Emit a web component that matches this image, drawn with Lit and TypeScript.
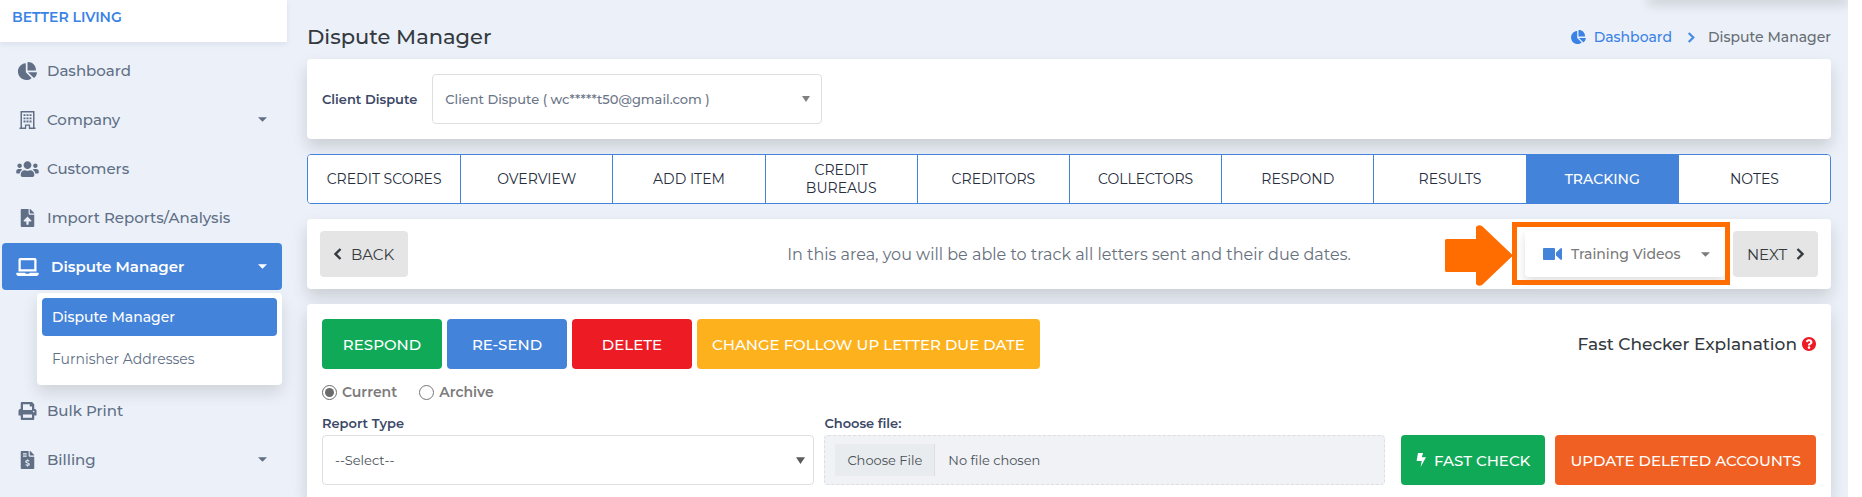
import { LitElement, html, css, svg, nothing } from "lit";
import { customElement, property, state } from "lit/decorators.js";
import { classMap } from "lit/directives/class-map.js";

const FILE_FOLD =
  "M377 105L279.1 7c-4.5-4.5-10.6-7-17-7H256v128h128v-6.1c0-6.3-2.5-12.4-7-16.9z";

const ICONS: Record<string, { box: string; body: unknown }> = {
  pie: {
    box: "32 0 544 512",
    body: svg`<path d="M304 240V16.6c0-9 7-16.6 16-16.6C443.7 0 544 100.3 544 224c0 9-7.6 16-16.6 16H304zM32 272C32 150.7 122.1 50.3 239 34.3c9.2-1.3 17 6.1 17 15.4V288L412.5 444.5c6.7 6.7 6.2 17.7-1.5 23.1C371.8 495.6 323.8 512 272 512C139.5 512 32 404.6 32 272zm526.4 16c9.3 0 16.6 7.8 15.4 17c-7.7 55.9-34.6 105.6-73.9 142.3c-6 5.6-15.4 5.2-21.2-.7L320 288H558.4z"/>`,
  },
  building: {
    box: "0 0 16 18",
    body: svg`<path fill-rule="evenodd" d="M1 0h14v16.6h1V18H9.300v-3.200H6.700V18H0v-1.400h1zM2.500 1.500v15.100h2.900V13.600h5.200v3h2.900V1.500z"/><path d="M4 3.200h2v1.900H4zM7 3.200h2v1.900H7zM10 3.200h2v1.900h-2zM4 6.400h2v1.900H4zM7 6.400h2v1.900H7zM10 6.400h2v1.900h-2zM4 9.600h2v1.900H4zM7 9.600h2v1.900H7zM10 9.600h2v1.900h-2z"/>`,
  },
  users: {
    box: "0 0 640 512",
    body: svg`<path d="M96 224c35.300 0 64-28.700 64-64s-28.700-64-64-64-64 28.700-64 64 28.700 64 64 64zm448 0c35.300 0 64-28.700 64-64s-28.700-64-64-64-64 28.700-64 64 28.700 64 64 64zm32 32h-64c-17.600 0-33.500 7.100-45.100 18.600 40.300 22.100 68.900 62 75.100 109.400h66c17.700 0 32-14.300 32-32v-32c0-35.300-28.700-64-64-64zm-256 0c61.900 0 112-50.100 112-112S381.900 32 320 32 208 82.100 208 144s50.100 112 112 112zm76.800 32h-8.300c-20.800 10-43.900 16-68.500 16s-47.600-6-68.500-16h-8.300C179.600 288 128 339.600 128 403.200V432c0 26.500 21.500 48 48 48h288c26.500 0 48-21.500 48-48v-28.800c0-63.600-51.600-115.200-115.200-115.200zm-223.700-13.400C161.500 263.100 145.600 256 128 256H64c-35.300 0-64 28.700-64 64v32c0 17.700 14.300 32 32 32h65.900c6.300-47.400 34.900-87.300 75.200-109.400z"/>`,
  },
  upload: {
    box: "0 0 384 512",
    body: svg`<path d="M224 136V0H24C10.700 0 0 10.700 0 24v464c0 13.300 10.700 24 24 24h336c13.300 0 24-10.700 24-24V160H248c-13.200 0-24-10.800-24-24zm65.180 216.010H224v80c0 8.840-7.160 16-16 16h-32c-8.840 0-16-7.160-16-16v-80H94.820c-14.280 0-21.410-17.290-11.270-27.360l96.420-95.700c6.650-6.610 17.390-6.610 24.040 0l96.420 95.700c10.150 10.070 3.030 27.360-11.250 27.360z"/><path d=${FILE_FOLD}/>`,
  },
  laptop: {
    box: "0 0 640 512",
    body: svg`<path d="M624 416H381.540c-.74 19.810-14.710 32-32.740 32H288c-18.690 0-33.020-17.470-32.770-32H16c-8.800 0-16 7.200-16 16v16c0 35.200 28.800 64 64 64h512c35.200 0 64-28.800 64-64v-16c0-8.800-7.200-16-16-16zM576 48c0-26.400-21.600-48-48-48H112C85.600 0 64 21.600 64 48v336h512V48zm-64 272H128V64h384v256z"/>`,
  },
  print: {
    box: "0 0 512 512",
    body: svg`<path d="M448 192V77.250c0-8.490-3.370-16.620-9.370-22.630L393.370 9.370c-6-6-14.140-9.370-22.630-9.370H96C78.330 0 64 14.330 64 32v160c-35.350 0-64 28.650-64 64v112c0 8.840 7.160 16 16 16h48v96c0 17.670 14.330 32 32 32h320c17.670 0 32-14.330 32-32v-96h48c8.840 0 16-7.160 16-16V256c0-35.350-28.650-64-64-64zm-64 256H128v-96h256v96zm0-224H128V64h192v48c0 8.840 7.160 16 16 16h48v96zm48 72c-13.250 0-24-10.750-24-24 0-13.260 10.750-24 24-24s24 10.740 24 24c0 13.250-10.750 24-24 24z"/>`,
  },
  invoice: {
    box: "0 0 384 512",
    body: svg`<path fill-rule="evenodd" d="M224 136V0H24C10.700 0 0 10.700 0 24v464c0 13.300 10.700 24 24 24h336c13.300 0 24-10.700 24-24V160H248c-13.200 0-24-10.800-24-24zM64 64h104v32H64zM64 128h104v32H64z"/><path d=${FILE_FOLD}/><path d="M240 290c-20-20-96-22-96 16 0 42 98 26 98 68 0 40-78 36-102 12M192 240v36M192 400v40" fill="none" stroke="#ecf1f9" stroke-width="34"/>`,
  },
  video: {
    box: "0 0 19 12",
    body: svg`<rect width="12" height="12" rx="1"/><path d="M13 4.500L17 .8Q19-.8 19 1.200v9.600q0 2-2 .4L13 7.500z"/>`,
  },
  right: {
    box: "0 0 8 12",
    body: svg`<path d="M1.500 1l5 5-5 5" fill="none" stroke="currentColor" stroke-width="2.400"/>`,
  },
  left: {
    box: "0 0 8 12",
    body: svg`<path d="M6.500 1l-5 5 5 5" fill="none" stroke="currentColor" stroke-width="2.400"/>`,
  },
  caret: { box: "0 0 8 4", body: svg`<path d="M0 0h8L4 4z"/>` },
  drop: { box: "0 0 8 6", body: svg`<path d="M0 0h8L4 6z"/>` },
  bolt: {
    box: "0 0 10 14",
    body: svg`<path d="M2 0h5L5.800 4.300H10L4.600 14l1.100-6H.6z"/>`,
  },
  help: {
    box: "8 8 496 496",
    body: svg`<path d="M504 256c0 136.997-111.043 248-248 248S8 392.997 8 256C8 119.083 119.043 8 256 8s248 111.083 248 248zM262.655 90c-54.497 0-89.255 22.957-116.549 63.758-3.536 5.286-2.353 12.415 2.715 16.258l34.699 26.310c5.205 3.947 12.621 3.008 16.665-2.122 17.864-22.658 30.113-35.797 57.303-35.797 20.429 0 45.698 13.148 45.698 32.958 0 14.976-12.363 22.667-32.534 33.976C247.128 238.528 216 254.941 216 296v4c0 6.627 5.373 12 12 12h56c6.627 0 12-5.373 12-12v-1.333c0-28.462 83.186-29.647 83.186-106.667 0-58.002-60.165-102-116.531-102zM256 338c-25.365 0-46 20.635-46 46 0 25.364 20.635 46 46 46s46-20.636 46-46c0-25.365-20.635-46-46-46z"/>`,
  },
};

const icon = (name: string, cls = "") =>
  html`<svg class="icon ${cls}" viewBox=${ICONS[name].box} fill="currentColor" aria-hidden="true">${ICONS[name].body}</svg>`;

interface NavItem {
  label: string;
  icon: string;
  menu?: boolean;
  active?: boolean;
  children?: string[];
}

const NAV: NavItem[] = [
  { label: "Dashboard", icon: "pie" },
  { label: "Company", icon: "building", menu: true },
  { label: "Customers", icon: "users" },
  { label: "Import Reports/Analysis", icon: "upload" },
  {
    label: "Dispute Manager",
    icon: "laptop",
    menu: true,
    active: true,
    children: ["Dispute Manager", "Furnisher Addresses"],
  },
  { label: "Bulk Print", icon: "print" },
  { label: "Billing", icon: "invoice", menu: true },
];

@customElement("side-nav")
export class SideNav extends LitElement {
  @property() brand = "";

  static styles = css`
    :host {
      display: block;
    }
    .brand {
      height: 42px;
      padding: 8px 12px;
      box-sizing: border-box;
      background: #fff;
      color: #3b82e6;
      font-size: 14px;
      font-weight: 600;
      line-height: 18px;
      box-shadow: 0 2px 6px rgba(60, 80, 120, 0.1);
    }
    ul {
      list-style: none;
      margin: 0;
      padding: 0;
    }
    .menu {
      display: grid;
      gap: 2px;
      padding: 5px 5px 0 2px;
    }
    a {
      display: flex;
      align-items: center;
      color: #606f86;
      text-decoration: none;
    }
    .item {
      height: 47px;
      padding: 0 15px 0 14px;
      font-size: 15px;
      font-weight: 500;
      border-radius: 4px;
      gap: 8px;
    }
    .item .label {
      flex: 1;
    }
    .item.active {
      background: #4483da;
      color: #fff;
      font-weight: 600;
      gap: 12px;
    }
    .icon {
      width: 23px;
      height: 18px;
    }
    .caret {
      width: 9px;
      height: 5px;
    }
    .sub {
      display: grid;
      gap: 4px;
      margin: 3px 0 0 35px;
      padding: 5px 5px 7px;
      border-radius: 4px;
      background: #fff;
      box-shadow: 0 8px 16px rgba(0, 0, 0, 0.12);
    }
    .sub a {
      height: 38px;
      padding: 0 10px;
      border-radius: 4px;
      font-size: 14px;
    }
    .sub a.active {
      background: #4483da;
      color: #fff;
      font-weight: 500;
    }
  `;

  render() {
    return html`
      <div class="brand">${this.brand}</div>
      <nav aria-label="Main">
        <ul class="menu">
          ${NAV.map(
            (n) => html`<li>
              <a class=${classMap({ item: true, active: !!n.active })} href="#">
                ${icon(n.icon)}<span class="label">${n.label}</span>
                ${n.menu ? icon("caret", "caret") : nothing}
              </a>
              ${n.children
                ? html`<ul class="sub">
                    ${n.children.map(
                      (c, i) => html`<li><a class=${classMap({ active: i === 0 })} href="#">${c}</a></li>`
                    )}
                  </ul>`
                : nothing}
            </li>`
          )}
        </ul>
      </nav>
    `;
  }
}

const TABS = [
  "CREDIT SCORES",
  "OVERVIEW",
  "ADD ITEM",
  "CREDIT BUREAUS",
  "CREDITORS",
  "COLLECTORS",
  "RESPOND",
  "RESULTS",
  "TRACKING",
  "NOTES",
];

@customElement("app-root")
export class AppRoot extends LitElement {
  @state() private tab = "TRACKING";

  static styles = css`
    :host {
      display: flex;
      position: relative;
      height: 100vh;
      overflow: hidden;
      box-sizing: border-box;
      border-right: 14px solid #fff;
      background: #ecf1f9;
      color: #343a40;
      font-family: Montserrat, Inter, "Open Sans", sans-serif;
      font-size: 14px;
    }
    * {
      box-sizing: border-box;
    }
    button,
    select,
    input {
      font: inherit;
      color: inherit;
    }
    button {
      border: 0;
      border-radius: 4px;
      padding: 0;
      cursor: pointer;
    }
    side-nav {
      flex: none;
      width: 287px;
    }
    main {
      flex: 1;
      min-width: 0;
      display: flex;
      flex-direction: column;
      gap: 15px;
      padding: 0 17px 0 20px;
    }
    .tray {
      position: absolute;
      top: -8px;
      right: 0;
      width: 200px;
      height: 8px;
      box-shadow: 0 4px 12px rgba(0, 0, 0, 0.18);
    }
    .head {
      display: flex;
      align-items: center;
      justify-content: space-between;
      height: 44px;
      padding-top: 15px;
      box-sizing: content-box;
      margin-bottom: -15px;
    }
    h1 {
      margin: 0;
      font-size: 21px;
      font-weight: 500;
      line-height: 28px;
    }
    .crumbs {
      display: flex;
      align-items: center;
      font-size: 14px;
      font-weight: 500;
      color: #676d73;
    }
    .crumbs a {
      display: flex;
      align-items: center;
      gap: 8px;
      color: #3b82e6;
      text-decoration: none;
    }
    .crumbs .icon {
      width: 15px;
      height: 14px;
    }
    .crumbs .sep {
      width: 8px;
      height: 11px;
      margin: 0 13px 0 15px;
      color: #4a8ae6;
    }
    .card {
      background: #fff;
      border-radius: 4px;
      box-shadow: 0 8px 16px rgba(0, 0, 0, 0.15);
    }
    .client {
      display: flex;
      align-items: center;
      gap: 15px;
      padding: 15px;
    }
    .client label,
    .field > label {
      color: #3b4766;
      font-size: 13px;
      font-weight: 600;
      line-height: 18px;
    }
    .select {
      position: relative;
      display: block;
      color: #6b7587;
    }
    .select select {
      appearance: none;
      display: block;
      width: 100%;
      height: 50px;
      padding: 0 34px 0 12px;
      border: 1px solid #dedfe1;
      border-radius: 4px;
      background: #fff;
      font-size: 13px;
    }
    .select .icon {
      position: absolute;
      top: 22px;
      right: 12px;
      width: 8px;
      height: 6px;
      color: #808080;
      pointer-events: none;
    }
    .client .select {
      width: 390px;
    }
    .client select {
      font-weight: 500;
    }
    .tabs {
      display: grid;
      grid-template-columns: repeat(10, 1fr);
      border: 1px solid #4483da;
      border-radius: 4px;
      background: #fff;
      overflow: hidden;
      flex: none;
    }
    .tabs button {
      height: 48px;
      padding: 0 24px;
      border-radius: 0;
      background: #fff;
      color: #262d3d;
      font-size: 14px;
      line-height: 18px;
    }
    .tabs button:first-child {
      padding: 0 8px;
    }
    .tabs button + button {
      border-left: 1px solid #4483da;
    }
    .tabs button.on {
      background: #4483da;
      color: #fff;
      font-weight: 500;
    }
    .steps {
      display: grid;
      grid-template-columns: 1fr auto 1fr;
      align-items: center;
      padding: 12px 13px;
    }
    .steps p {
      margin: 0;
      font-size: 16px;
      color: #67707d;
    }
    .prev,
    .next {
      display: flex;
      gap: 8px;
    }
    .next {
      justify-content: flex-end;
    }
    .step {
      display: flex;
      align-items: center;
      justify-content: center;
      gap: 9px;
      height: 46px;
      padding: 0 14px;
      background: #e5e5e5;
      font-size: 15px;
    }
    .step .icon {
      width: 8px;
      height: 12px;
    }
    .training {
      position: relative;
    }
    .videos {
      display: flex;
      align-items: center;
      gap: 9px;
      width: 200px;
      height: 46px;
      padding: 0 15px 0 18px;
      background: #fff;
      color: #7a7a7a;
      font-size: 14px;
      font-weight: 500;
      box-shadow: 0 4px 10px rgba(0, 0, 0, 0.13);
    }
    .videos span {
      flex: 1;
      text-align: left;
      white-space: nowrap;
    }
    .videos .cam {
      width: 19px;
      height: 12px;
      color: #4483da;
    }
    .videos .caret {
      width: 9px;
      height: 5px;
    }
    .frame {
      position: absolute;
      inset: -9px -5px -8px -13px;
      border: 5px solid #ff6c00;
      pointer-events: none;
    }
    .arrow {
      position: absolute;
      top: -6px;
      right: calc(100% + 12px);
      width: 68px;
      height: 61px;
      fill: #ff6c00;
      pointer-events: none;
    }
    .work {
      flex: 1;
      padding: 15px 15px 0;
      border-radius: 4px 4px 0 0;
    }
    .actions {
      display: flex;
      align-items: center;
      gap: 5px;
    }
    .btn {
      display: inline-flex;
      align-items: center;
      justify-content: center;
      gap: 8px;
      height: 50px;
      min-width: 120px;
      padding: 0 15px;
      color: #fff;
      font-size: 15px;
      font-weight: 500;
      white-space: nowrap;
    }
    .btn .icon {
      width: 10px;
      height: 14px;
    }
    .green {
      background: #10a957;
    }
    .blue {
      background: #4483da;
    }
    .red {
      background: #ed1c24;
    }
    .amber {
      background: #fdb11c;
    }
    .orange {
      background: #f06022;
    }
    .explain {
      display: flex;
      align-items: center;
      gap: 5px;
      margin-left: auto;
      font-size: 17px;
      font-weight: 500;
    }
    .explain button {
      display: flex;
      background: none;
      color: #ed1c24;
    }
    .explain .icon {
      width: 14px;
      height: 14px;
    }
    .views {
      display: flex;
      gap: 22px;
      padding: 13px 0 12px;
    }
    .views label {
      display: flex;
      align-items: center;
      gap: 5px;
      height: 20px;
      color: #7b7b7b;
      font-size: 14px;
      font-weight: 600;
    }
    .views input {
      width: 15px;
      height: 15px;
      margin: 0;
      accent-color: #6b6b6b;
    }
    .form {
      display: flex;
      align-items: flex-end;
    }
    .field {
      display: grid;
      gap: 3px;
    }
    .report {
      flex: 491 1 0;
      margin-right: 10px;
    }
    .report .select {
      color: #495057;
    }
    .report .icon {
      width: 9px;
      height: 7px;
      right: 9px;
      color: #5c5c5c;
    }
    .upload {
      flex: 559 1 0;
      margin-right: 16px;
    }
    .upload input {
      width: 100%;
      height: 50px;
      padding: 8px 10px;
      border: 1px dashed #dcdee2;
      border-radius: 4px;
      background: #f0f2f6;
      color: #495057;
      font-size: 13px;
      line-height: 32px;
    }
    .upload input::file-selector-button {
      height: 32px;
      margin: 0 13px 0 0;
      padding: 0 12px;
      border: 0;
      border-right: 1px solid #dcdfe3;
      background: #e9ecef;
      color: #495057;
      font: inherit;
      line-height: 32px;
    }
    .run {
      display: flex;
      gap: 10px;
    }
  `;

  render() {
    return html`
      <side-nav brand="BETTER LIVING"></side-nav>
      <div class="tray"></div>
      <main>
        <header class="head">
          <h1>Dispute Manager</h1>
          <nav class="crumbs" aria-label="Breadcrumb">
            <a href="#">${icon("pie")}Dashboard</a>
            ${icon("right", "sep")}
            <span>Dispute Manager</span>
          </nav>
        </header>

        <section class="card client">
          <label for="client">Client Dispute</label>
          <div class="select">
            <select id="client">
              <option>Client Dispute ( wc*****t50@gmail.com )</option>
            </select>
            ${icon("drop")}
          </div>
        </section>

        <nav class="tabs" aria-label="Sections">
          ${TABS.map(
            (t) => html`<button
              type="button"
              class=${classMap({ on: t === this.tab })}
              @click=${() => (this.tab = t)}
            >${t}</button>`
          )}
        </nav>

        <section class="card steps">
          <div class="prev">
            <button type="button" class="step">${icon("left")}BACK</button>
          </div>
          <p>In this area, you will be able to track all letters sent and their due dates.</p>
          <div class="next">
            <div class="training">
              <button type="button" class="videos" aria-haspopup="menu">
                ${icon("video", "cam")}<span>Training Videos</span>${icon("caret", "caret")}
              </button>
              <div class="frame"></div>
              <svg class="arrow" viewBox="0 0 68 61" aria-hidden="true">
                <path d="M1.500 14H31V2q2-3 6-1L68 30.500 37 60q-4 2-6-1V47H1.500Q0 47 0 45.500v-30Q0 14 1.500 14z" />
              </svg>
            </div>
            <button type="button" class="step">NEXT${icon("right")}</button>
          </div>
        </section>

        <section class="card work">
          <div class="actions">
            <button type="button" class="btn green">RESPOND</button>
            <button type="button" class="btn blue">RE-SEND</button>
            <button type="button" class="btn red">DELETE</button>
            <button type="button" class="btn amber">CHANGE FOLLOW UP LETTER DUE DATE</button>
            <div class="explain">
              Fast Checker Explanation
              <button type="button" aria-label="Help">${icon("help")}</button>
            </div>
          </div>
          <div class="views">
            <label><input type="radio" name="view" checked />Current</label>
            <label><input type="radio" name="view" />Archive</label>
          </div>
          <div class="form">
            <div class="field report">
              <label for="report">Report Type</label>
              <div class="select">
                <select id="report">
                  <option>--Select--</option>
                </select>
                ${icon("drop")}
              </div>
            </div>
            <div class="field upload">
              <label for="file">Choose file:</label>
              <input id="file" type="file" />
            </div>
            <div class="run">
              <button type="button" class="btn green">${icon("bolt")}FAST CHECK</button>
              <button type="button" class="btn orange">UPDATE DELETED ACCOUNTS</button>
            </div>
          </div>
        </section>
      </main>
    `;
  }
}
